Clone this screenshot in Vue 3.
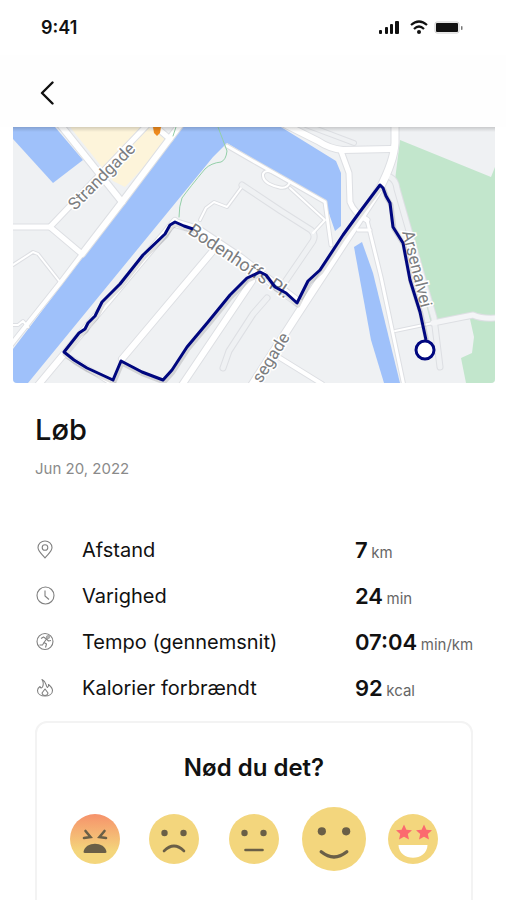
<script setup>
import { ref } from 'vue'

// Map roads: outlines are painted first, then the fill on top
const roads = [
  { d: 'M13 227 H50 L150 122', w: 5, fill: '#fff' },
  { d: 'M58 122 L122 202', w: 6, fill: '#fff' },
  { d: 'M50 227 L82 254', w: 5, fill: '#fff' },
  { d: 'M156 127 L170 139', w: 5, fill: '#fff' },
  { d: 'M180 125 L122 202 L82 254', w: 6, fill: '#fff' },
  { d: 'M82 254 L60 283 L10 346', w: 4, fill: '#fff' },
  { d: 'M13 265 L33 252 L38 254 L60 282', w: 2, fill: '#fff' },
  { d: 'M13 325 L18 325 L23 321 L28 327', w: 2, fill: '#fff' },
  { d: 'M175 221 L64 354 L34 390', w: 6, fill: '#fff' },
  { d: 'M212 252 L122 359', w: 6, fill: '#fff' },
  { d: 'M252 281 L180 388', w: 6, fill: '#fff' },
  { d: 'M64 354 L116 386', w: 4, fill: '#fff' },
  { d: 'M200 220 L206 208 L214 202 L227 207 L241 188', w: 2, fill: '#fff' },
  { d: 'M242 185 L281 211 L311 230 Q316 235 313 241 L285 282', w: 5, fill: '#eff1f3' },
  { d: 'M267 298 L253 314 L229 351 L223 368', w: 5, fill: '#eff1f3' },
  { d: 'M227 146 L253 161 L290 182 L325 202 L331 245', w: 3, fill: '#fff' },
  { d: 'M263 174 Q266 168 276 174 L290 182 Q287 190 278 187 Q262 183 263 174', w: 2, fill: '#fff' },
  { d: 'M290 188 L325 220 L313 233', w: 2, fill: '#fff' },
  { d: 'M306 125 L354 143', w: 4, fill: '#eff1f3' },
  { d: 'M284 124 L318 141 Q330 149 343 150 L391 149', w: 6, fill: '#fff' },
  { d: 'M341 151 L349 173 L350 202 Q354 213 367 220', w: 5, fill: '#fff' },
  { d: 'M367 220 L381 277 L404 386', w: 3, fill: '#fff' },
  { d: 'M358 230 H370', w: 3, fill: '#fff' },
  { d: 'M280 358 L322 384', w: 4, fill: '#fff' },
  { d: 'M390 177 Q396 180 397 189 L434 318 L440 367', w: 5, fill: '#eff1f3' },
  { d: 'M395 331 L433 323', w: 2, fill: '#fff' },
  { d: 'M433 323 L473 315 Q481 319 497 318', w: 5, fill: '#f4f5f7' },
  { d: 'M395 122 V143 Q394 161 380 188 L297 315 L250 388', w: 7, fill: '#fff' },
  { d: 'M175 223 L198 230 L240 258 L299 303', w: 8, fill: '#fff' }
]

const route = 'M193 229 L184 226 L175 222 L170 225 L165 234 L143 255 L120 284 L102 302 L95 316 L88 323 L85 329 L79 333 L64 352 L74 360 L87 368 L113 380 L121 361 L142 372 L163 380 L172 370 L187 347 L208 322 L230 295 L247 278 L260 272 L266 275 L275 287 L286 293 L297 303 L308 281 L320 270 L343 235 L359 213 L380 185 L383 188 L386 196 L390 203 L393 227 L403 243 L410 280 L420 312 L426 340'

const stats = [
  { icon: 'pin', label: 'Afstand', value: '7', unit: 'km' },
  { icon: 'clock', label: 'Varighed', value: '24', unit: 'min' },
  { icon: 'pace', label: 'Tempo (gennemsnit)', value: '07:04', unit: 'min/km' },
  { icon: 'fire', label: 'Kalorier forbrændt', value: '92', unit: 'kcal' }
]

const moods = ['angry', 'sad', 'neutral', 'happy', 'love']
const selected = ref('happy')
</script>

<template>
  <div class="screen">
    <div class="status">
      <span>9:41</span>
      <svg class="status-icons" viewBox="0 0 86 16" aria-hidden="true">
        <g fill="#111">
          <rect x="1" y="10" width="3" height="4" rx="1" />
          <rect x="7" y="7" width="3" height="7" rx="1" />
          <rect x="12" y="4" width="3" height="10" rx="1" />
          <rect x="17" y="1" width="4" height="13" rx="1" />
          <circle cx="41" cy="12" r="2" />
          <rect x="58" y="3" width="22" height="9" rx="1" />
          <rect x="83" y="6" width="1.5" height="4" rx="0.7" fill="#777" />
        </g>
        <rect x="57" y="2" width="24" height="11" rx="2" fill="none" stroke="#ccc" />
        <g fill="none" stroke="#111" stroke-width="2.2">
          <path d="M33 5 Q41 -2 49 5" />
          <path d="M36 9 Q41 4 46 9" />
        </g>
      </svg>
    </div>

    <header class="bar">
      <button class="back" aria-label="Tilbage">
        <svg viewBox="0 0 14 24"><path d="M12.5 1.5 L2 12 L12.5 22.5" /></svg>
      </button>
    </header>

    <svg class="map" viewBox="13 127 482 256">
      <defs>
        <linearGradient id="edge" x1="0" y1="0" x2="0" y2="1">
          <stop offset="0" stop-color="#000" stop-opacity="0.16" />
          <stop offset="1" stop-color="#000" stop-opacity="0" />
        </linearGradient>
      </defs>
      <rect x="13" y="127" width="482" height="256" fill="#eff1f3" />
      <path d="M70 127 H148 L168 141 L125 187 L113 181 Z" fill="#fdf4da" />
      <path d="M400 140 L491 177 L495 167 V383 H466 L461 358 L472 353 L474 337 L470 319 L431 324 L395 180 Z" fill="#c2e6cc" />
      <g fill="#9fc1fa">
        <path d="M13 127 H55 L83 160 L53 183 L13 139 Z" />
        <path d="M182 127 H281 L336 161 L341 173 V226 L335 231 L325 202 L253 159 L227 143 L213 157 L28 383 H13 V349 Z" />
        <path d="M354 247 L362 242 L373 273 L400 383 H384 L371 340 Z" />
      </g>
      <g fill="none" stroke-linejoin="round" stroke-linecap="round">
        <path v-for="(r, i) in roads" :key="'o' + i" :d="r.d" stroke="#dddfe3" :stroke-width="r.w + 2" />
        <path v-for="(r, i) in roads" :key="'f' + i" :d="r.d" :stroke="r.fill" :stroke-width="r.w" />
        <path d="M218 127 Q223 140 227 151 Q226 160 221 162 Q211 163 205 169 Q190 187 182 198 Q179 206 179 217 M176 127 L173 136" stroke="#93cfa8" />
      </g>
      <path d="M153 127 H161 L160 133 L157 136 L154 133 Z" fill="#ee8a1d" />
      <g class="names">
        <text transform="translate(75 211) rotate(-45)" font-size="17">Strandgade</text>
        <text transform="translate(187 233) rotate(34)" font-size="18">Bodenhoffs Pl.</text>
        <text transform="translate(261 384) rotate(-58)" font-size="17">segade</text>
        <text transform="translate(402 232) rotate(76)" font-size="17">Arsenalvei</text>
      </g>
      <path :d="route" class="route-shadow" />
      <path :d="route" class="route" />
      <circle cx="425" cy="350" r="9" fill="#fff" stroke="#00077f" stroke-width="3" />
      <rect x="13" y="127" width="482" height="5" fill="url(#edge)" />
    </svg>

    <main>
      <h1>Løb</h1>
      <p class="date">Jun 20, 2022</p>

      <dl class="stats">
        <div v-for="s in stats" :key="s.icon" class="stat">
          <dt>
            <svg class="stat-icon" viewBox="0 0 20 20" aria-hidden="true">
              <template v-if="s.icon === 'pin'">
                <path d="M10 18 C7.5 14.5 3 11.5 3 7.5 A7 6.5 0 0 1 17 7.5 C17 11.5 12.5 14.5 10 18 Z" />
                <circle cx="10" cy="7.5" r="2.8" />
              </template>
              <template v-else-if="s.icon === 'clock'">
                <circle cx="10.5" cy="9.5" r="8.5" />
                <path d="M10 4.5 V10 L14 13.5" />
              </template>
              <template v-else-if="s.icon === 'pace'">
                <circle cx="10" cy="9.5" r="8" />
                <circle cx="13" cy="5" r="1.3" />
                <path d="M6 6.5 L8.5 5 L11.5 7 L9 10.5 L11.5 12 L10.5 15.5 M11.5 7 L13.5 9 L16 8.5 M9 10.5 L7.5 13 L4.5 13" />
              </template>
              <template v-else>
                <path d="M7 1.5 C12 4 10 7 12.5 9.5 C13.5 9 13.8 7.5 13.5 6.5 C16 8.5 17.5 10.5 17.5 12.5 C17.5 16 14 18 10 18 C6 18 2.5 16 2.5 12.5 C2.5 10.5 3.5 9.5 5 8.5 C5.5 10 6.5 10.5 7.5 9 C8.5 7 8.5 4 7 1.5 Z" />
                <path d="M10 11 L13 15 Q12.5 17.5 10 17.5 Q7.5 17.5 7 15 Z" />
              </template>
            </svg>
            {{ s.label }}
          </dt>
          <dd>{{ s.value }} <small>{{ s.unit }}</small></dd>
        </div>
      </dl>

      <section class="card">
        <h2>Nød du det?</h2>
        <div class="moods">
          <button
            v-for="m in moods"
            :key="m"
            class="mood"
            :class="{ active: selected === m }"
            :aria-label="m"
            :aria-pressed="selected === m"
            @click="selected = m"
          >
            <svg viewBox="0 0 50 50">
              <defs>
                <linearGradient id="rage" x1="0" y1="0" x2="0" y2="1">
                  <stop offset="0" stop-color="#f6926b" />
                  <stop offset="0.75" stop-color="#f4d67c" />
                </linearGradient>
              </defs>
              <circle cx="25" cy="25" r="25" :fill="m === 'angry' ? 'url(#rage)' : '#f3d67d'" />
              <g v-if="m === 'angry'">
                <path d="M15.5 17 L20.5 23 L14 24 M34.5 17 L29.5 23 L36 24" class="line" />
                <path d="M13.5 38 C15 27 35 27 36.5 38 Q36.5 39 35 39 H15 Q13.5 39 13.5 38 Z" fill="#6a5f47" />
              </g>
              <g v-else-if="m === 'love'">
                <g fill="#fb6a6f">
                  <path id="star" d="M16 10.5 L18.4 15.7 L24 16.3 L19.8 20.1 L21 25.6 L16 22.8 L11 25.6 L12.2 20.1 L8 16.3 L13.6 15.7 Z" />
                  <use href="#star" x="20" />
                </g>
                <path d="M10.5 31 H39.5 C39 48 11 48 10.5 31 Z" fill="#fff" />
              </g>
              <g v-else>
                <circle cx="15.5" cy="19" r="3.2" fill="#6a5f47" />
                <circle cx="34.5" cy="19" r="3.2" fill="#6a5f47" />
                <path v-if="m === 'sad'" d="M15 37 Q25 27 35 37" class="line" />
                <path v-else-if="m === 'neutral'" d="M16.5 36 H33.5" class="line" />
                <path v-else d="M15 35 Q25 43 35 35" class="line" />
              </g>
            </svg>
          </button>
        </div>
      </section>
    </main>
  </div>
</template>

<style>
body {
  background: #fff;
}
</style>

<style scoped>
.screen {
  height: 100vh;
  overflow-y: auto;
  scrollbar-width: none;
  font-family: Inter, "Liberation Sans", sans-serif;
  color: #111;
}

.status {
  display: flex;
  justify-content: space-between;
  align-items: center;
  height: 55px;
  padding: 0 42px 0 41px;
  font-size: 18px;
  font-weight: 600;
}

.status-icons {
  width: 86px;
  height: 16px;
}

.bar {
  display: flex;
  align-items: center;
  height: 72px;
  padding: 0 40px;
  background: #fefefe;
  box-sizing: border-box;
}

.back {
  display: flex;
  padding: 4px 0 0;
  border: none;
  background: none;
  cursor: pointer;
}

.back svg {
  width: 14px;
  height: 24px;
  fill: none;
  stroke: #111;
  stroke-width: 2.4;
  stroke-linecap: round;
  stroke-linejoin: round;
}

.map {
  display: block;
  width: calc(100% - 24px);
  margin: 0 11px 0 13px;
  border-radius: 0 0 4px 4px;
}

.names {
  font-family: Roboto, sans-serif;
  fill: #7b7d80;
  stroke: #fff;
  stroke-width: 3px;
  paint-order: stroke;
}

.route,
.route-shadow {
  fill: none;
  stroke: #00077f;
  stroke-width: 3;
  stroke-linejoin: round;
}

.route-shadow {
  stroke: #000;
  stroke-width: 5;
  opacity: 0.12;
  transform: translate(1px, 2px);
}

main {
  padding: 0 33px 40px 35px;
}

h1 {
  margin: 29px 0 0;
  font-size: 29px;
  line-height: 36px;
  font-weight: 500;
}

.date {
  margin: 11px 0 0;
  font-size: 15px;
  line-height: 20px;
  color: #8a8a8a;
}

.stats {
  margin: 48px 0 0;
}

.stat {
  display: grid;
  grid-template-columns: 320px 1fr;
  align-items: center;
  height: 46px;
}

dt {
  display: flex;
  align-items: center;
  gap: 27px;
  font-size: 20px;
}

.stat-icon {
  width: 20px;
  height: 20px;
  fill: none;
  stroke: #808080;
  stroke-width: 1.1;
  stroke-linejoin: round;
}

dd {
  margin: 0;
  font-size: 22px;
  font-weight: 600;
  white-space: nowrap;
}

small {
  margin-left: -2px;
  font-size: 15px;
  font-weight: 400;
  color: #666;
}

.card {
  margin-top: 10px;
  padding: 30px 0 70px;
  border: 2px solid #f3f3f3;
  border-radius: 12px;
}

h2 {
  margin: 0;
  font-size: 24px;
  line-height: 30px;
  font-weight: 600;
  text-align: center;
}

.moods {
  display: grid;
  grid-template-columns: repeat(5, 1fr);
  justify-items: center;
  align-items: center;
  height: 64px;
  margin: 24px 18px 0;
}

.mood {
  width: 50px;
  padding: 0;
  border: none;
  background: none;
  cursor: pointer;
}

.mood.active {
  width: 64px;
}

.mood svg {
  display: block;
  width: 100%;
}

.line {
  fill: none;
  stroke: #6a5f47;
  stroke-width: 2.6;
  stroke-linecap: round;
}
</style>
